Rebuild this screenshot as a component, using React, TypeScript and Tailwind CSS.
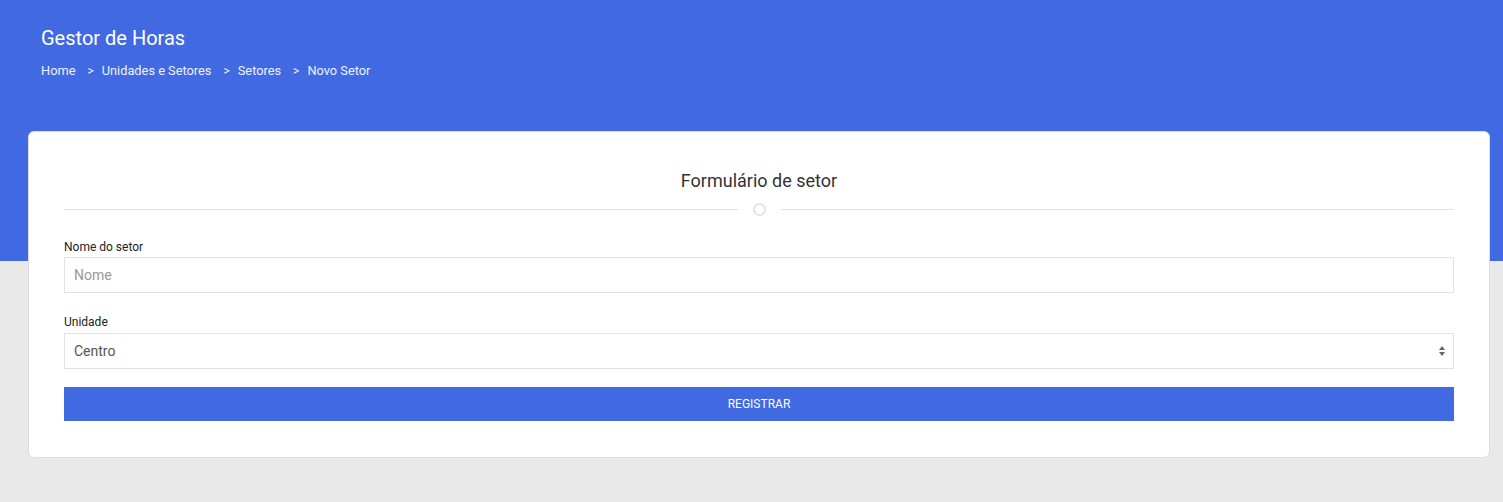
import { useState } from "react";

const crumbs = ["Home", "Unidades e Setores", "Setores", "Novo Setor"];

const App = () => {
  const [nome, setNome] = useState("");
  const [unidade, setUnidade] = useState("centro");

  return (
    <div className="min-h-[502px] bg-[#e9e9e9] font-['Roboto','Liberation_Sans',sans-serif]">
      {/* Header */}
      <header className="h-[261px] bg-[#4169e1] px-[41px] pt-[24px] text-white">
        <h1 className="text-[20px] leading-[28px] font-normal">Gestor de Horas</h1>
        <nav className="mt-[10px] flex items-center text-[12.8px] leading-[18px] text-[#eef2ff]">
          {crumbs.map((c, i) => (
            <span key={c} className="flex items-center">
              {i > 0 && <span className="ml-[12px] mr-[8px] text-[12px]">&gt;</span>}
              <span>{c}</span>
            </span>
          ))}
        </nav>
      </header>

      {/* Form card */}
      <div className="-mt-[130px] ml-[28px] mr-[13px] rounded-[6px] border border-[#dedede] bg-white px-[35px] pt-[37px] pb-[36px]">
        <h2 className="text-center text-[18px] leading-[24px] text-[#333]">Formulário de setor</h2>
        <div className="mt-[10px] flex items-center">
          <div className="h-px flex-1 bg-[#e3e3e3]" />
          <div className="mx-[15px] h-[13px] w-[13px] rounded-full border-2 border-[#e3e3e3]" />
          <div className="h-px flex-1 bg-[#e3e3e3]" />
        </div>

        <form className="mt-[23px]" onSubmit={(e) => e.preventDefault()}>
          <label className="block text-[12px] leading-[16px] text-[#222]">Nome do setor</label>
          <input
            value={nome}
            onChange={(e) => setNome(e.target.value)}
            placeholder="Nome"
            className="mt-[2px] block h-[36px] w-full border border-[#e3e3e3] px-[9px] text-[14px] text-[#555] placeholder:text-[#999] outline-none"
          />

          <label className="mt-[21px] block text-[12px] leading-[16px] text-[#222]">Unidade</label>
          <div className="relative mt-[3px]">
            <select
              value={unidade}
              onChange={(e) => setUnidade(e.target.value)}
              className="block h-[36px] w-full appearance-none border border-[#e3e3e3] bg-white px-[9px] text-[14px] text-[#555] outline-none"
            >
              <option value="centro">Centro</option>
            </select>
            <svg className="pointer-events-none absolute right-[9px] top-[13px]" width="6" height="10" viewBox="0 0 6 10">
              <path d="M3 0 L6 4 H0 Z" fill="#666" />
              <path d="M0 6 H6 L3 10 Z" fill="#666" />
            </svg>
          </div>

          <button
            type="submit"
            className="mt-[18px] block h-[34px] w-full bg-[#4169e1] text-[12px] uppercase text-white"
          >
            Registrar
          </button>
        </form>
      </div>
    </div>
  );
};

export default App;
